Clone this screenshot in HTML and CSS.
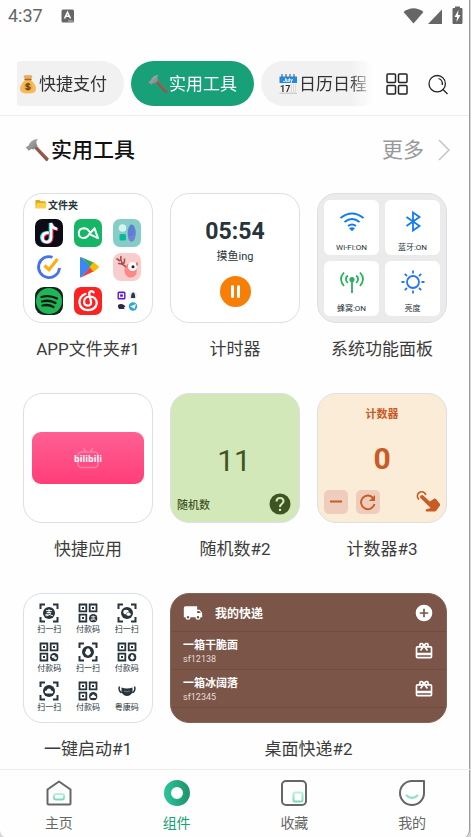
FILE: index.html
```html
<!DOCTYPE html>
<html lang="zh-CN">
<head>
<meta charset="utf-8">
<meta name="viewport" content="width=device-width, initial-scale=1">
<title>组件</title>
<link rel="stylesheet" href="styles.css">
</head>
<body>
<svg class="defs" aria-hidden="true">
  <defs>
    <linearGradient id="ring" x1="0" y1="0" x2="1" y2="0"><stop offset="0" stop-color="#2abf97"/><stop offset="1" stop-color="#1f9872"/></linearGradient>
    <linearGradient id="steel" x1="0" y1="0" x2="1" y2="1"><stop offset="0" stop-color="#b5b9bb"/><stop offset="1" stop-color="#74797c"/></linearGradient>
    <linearGradient id="mint" x1="0" y1="0" x2="0" y2="1"><stop offset="0" stop-color="#bdeedd"/><stop offset="1" stop-color="#79d9bc"/></linearGradient>
    <symbol id="hammer" viewBox="0 0 24 24">
      <path d="M8.500 9.500 11 7.200 23.300 20.200Q24 22.500 21.300 23.300Z" fill="#8d5a4b"/>
      <path d="m9 8.500 1.500-1.200 12.500 13" fill="none" stroke="#a8705f" stroke-width="1"/>
      <path d="M.6 9.300 3.300 7.800Q6 1.200 13 1q-2.500 2-1.600 4.200l1 2.600-3.800 3.800-2.300-.6-2.700 1.800Z" fill="url(#steel)"/>
    </symbol>
    <symbol id="scan" viewBox="0 0 20 20">
      <path d="M1.500 6V1.500H6M14 1.500h4.500V6M18.500 14v4.500H14M6 18.500H1.500V14" fill="none" stroke="#27343a" stroke-width="2"/>
    </symbol>
    <symbol id="qr" viewBox="0 0 20 20">
      <g fill="none" stroke="#27343a" stroke-width="1.800"><path d="M1.500 1.500h6.800v6.800H1.500zM11.700 1.500h6.800v6.800h-6.800zM1.500 11.700h6.800v6.800H1.500z"/></g>
      <path d="M4 4h2v2H4zM14 4h2v2h-2zM4 14h2v2H4z" fill="#27343a"/>
    </symbol>
    <symbol id="gift" viewBox="0 0 24 24">
      <path d="M20 6h-2.180c.11-.31.18-.65.18-1a3 3 0 0 0-5.500-1.650l-.5.670-.5-.680A3 3 0 0 0 6 5c0 .35.070.69.180 1H4a2 2 0 0 0-2 2v11a2 2 0 0 0 2 2h16a2 2 0 0 0 2-2V8a2 2 0 0 0-2-2zm-5-2a1 1 0 1 1 0 2 1 1 0 0 1 0-2zM9 4a1 1 0 1 1 0 2 1 1 0 0 1 0-2zm11 15H4v-2h16v2zm0-5H4V8h5.080L7 10.830 8.620 12 12 7.400l3.380 4.600L17 10.830 14.920 8H20v6z" fill="currentColor"/>
    </symbol>
    <symbol id="pay" viewBox="0 0 10 10"><circle cx="5" cy="5" r="5" fill="#27343a"/><path d="M2.500 3h5M5 1.700v2.800M3 4.600h3.600Q5.500 7 3.200 7.400 1.800 7.200 2.400 6.200q1.500-1 5.900 1.200" fill="none" stroke="#fff" stroke-width=".8"/></symbol>
    <symbol id="chat" viewBox="0 0 10 10"><circle cx="5" cy="5" r="5" fill="#27343a"/><ellipse cx="4.200" cy="4.200" rx="2.300" ry="1.900" fill="#fff"/><ellipse cx="6.300" cy="6" rx="2" ry="1.600" fill="#fff" stroke="#27343a" stroke-width=".4"/></symbol>
    <symbol id="penguin" viewBox="0 0 10 10"><circle cx="5" cy="5" r="5" fill="#27343a"/><path d="M5 1.800Q6.700 1.800 6.800 4q1.100 1.500.7 2.500l-.8-.2Q6.600 8 5 8T3.300 6.300l-.8.2Q2.100 5.500 3.200 4 3.300 1.800 5 1.800z" fill="#fff"/></symbol>
    <symbol id="cloud" viewBox="0 0 10 10"><circle cx="5" cy="5" r="5" fill="#27343a"/><path d="M2.700 7Q1.200 6.700 1.600 5.500 2 4.500 3 4.700 3.500 3 5 3t2 1.700q1.500 0 1.500 1.200T7.300 7z" fill="#fff"/></symbol>
  </defs>
</svg>

<div class="phone">
  <div class="status">
    <span class="clock">4:37</span>
    <svg class="status-app" viewBox="0 0 14 14" aria-hidden="true"><rect x=".5" y=".5" width="12.500" height="13" rx="1.500" fill="#666"/><path d="m3.500 9.500 3-6.300 3 6.300M4.800 7.300h3.500" fill="none" stroke="#fff" stroke-width="1.500"/><path d="M7 12h5" stroke="#ddd" stroke-width=".8"/></svg>
    <svg class="status-signals" viewBox="0 0 60 20" aria-hidden="true">
      <path d="M.5 6Q10.500-1.500 20.500 6L10.500 17.500z" fill="#666"/>
      <path d="M25 18 39 3.500V18z" fill="#666"/>
      <path d="M50.500 2H52V.500h5V2h1.500q1 0 1 1v13.500q0 1.500-1 1.500h-8q-1 0-1-1.500V3q0-1 1-1z" fill="#666"/><path d="m55.500 4-4 7H54l-.5 5 4-7H55z" fill="#fff"/>
    </svg>
  </div>

  <header class="topbar">
    <div class="chips">
      <button class="chip" type="button"><svg class="emoji" viewBox="0 0 20 20" aria-hidden="true"><path d="M7 .7q1.500 1 3 .2 1.500.9 3-.2l1.500 2L12.500 6h-5L5.500 2.700z" fill="#e8ad57"/><path d="M7.500 5.500h5q5.500 5 5.500 9.500Q18 19.500 10 19.500T2 15q0-4.500 5.500-9.500z" fill="#f5b957"/><path d="M7 5.500h6" stroke="#a66c27" stroke-width="1.400" stroke-linecap="round"/><circle cx="10" cy="12.700" r="4.300" fill="#f2a83c"/><path d="M12 10.800Q11.500 9.900 10 9.900q-2 0-2 1.300t2 1.400q2.200.2 2.200 1.500T10 15.500q-1.900 0-2.300-1.200M10 8.800v7.800" fill="none" stroke="#6b4416" stroke-width="1.300"/></svg>快捷支付</button>
      <button class="chip chip-on" type="button"><svg class="emoji" aria-hidden="true"><use href="#hammer"/></svg>实用工具</button>
      <button class="chip" type="button"><svg class="emoji" viewBox="0 0 20 20" aria-hidden="true"><rect x="1.500" y="2" width="17.500" height="17.500" rx="1" fill="#f2f2f2"/><path d="M1.500 2.500h17.500v6.500H1.500z" fill="#2489dc"/><path d="M4 0v3M8 0v3M12 0v3M16 0v3" stroke="#5b6972" stroke-width="1.200"/><text x="10" y="8" class="cal-month">July</text><text x="7.200" y="17.500" class="cal-day">17</text><path d="M13 11h5M13 13h5M13 15h5M13 17h5" stroke="#bbb" stroke-width=".8" stroke-dasharray="1 1"/><path d="M1.500 19.200h17.500" stroke="#b8c2c8"/></svg>日历日程</button>
    </div>
    <button class="tool" type="button" aria-label="全部分类"><svg viewBox="0 0 22 22" aria-hidden="true"><g fill="none" stroke="#222" stroke-width="1.500"><rect x="1" y="1" width="8.500" height="8.500" rx="1"/><rect x="12.500" y="1" width="8.500" height="8.500" rx="1"/><rect x="1" y="12.500" width="8.500" height="8.500" rx="1"/><rect x="12.500" y="12.500" width="8.500" height="8.500" rx="1"/></g></svg></button>
    <button class="tool" type="button" aria-label="搜索"><svg viewBox="0 0 22 22" aria-hidden="true"><g fill="none" stroke="#222" stroke-width="1.300"><circle cx="10.200" cy="10.700" r="8.200"/><path d="m16 16.500 4.500 4.500"/><path d="M11.500 5.500q4.500 1.500 3.800 6.500"/></g></svg></button>
  </header>

  <main>
    <div class="section-head">
      <h1><svg class="title-icon" aria-hidden="true"><use href="#hammer"/></svg>实用工具</h1>
      <a class="more" href="#more">更多<svg viewBox="0 0 12 22" aria-hidden="true"><path d="m1 1 10 10L1 21" fill="none" stroke="#c4c4c4" stroke-width="1.500"/></svg></a>
    </div>

    <div class="widgets">
      <figure>
        <div class="card folder">
          <div class="folder-title"><svg viewBox="0 0 12 12" aria-hidden="true"><path d="M.5 2h4l1.200 1.300h4.800V10H.5z" fill="#e8a51b"/><path d="M2 5h9.800l-1.300 5.500H.5z" fill="#fdd147"/></svg>文件夹</div>
          <div class="apps">
            <svg viewBox="0 0 28 28" role="img" aria-label="抖音"><rect width="28" height="28" rx="7" fill="#0c0b16"/><g fill="none" stroke-width="3"><path d="M13 13.500q-6-.5-6.500 5 .5 4.500 4.500 4.500 4-.2 4.200-5V4q.5 4.500 6 5.500" stroke="#25e8e0"/><path d="M14.800 14.500q-6-.5-6.500 5 .5 4 4.500 4 4-.2 4.200-5V5q.5 4.500 6 5.500" stroke="#fb2b54"/><path d="M13.900 13.800q-6-.5-6.500 5 .5 4.300 4.500 4.300 4-.2 4.200-5V4q.5 5 6 6" stroke="#fff" stroke-width="2.600"/></g></svg>
            <svg viewBox="0 0 28 28" role="img" aria-label="酷安"><rect width="28" height="28" rx="7" fill="#15b766"/><path d="M14 10.800Q12.500 9.300 10 9.300q-5.200.2-5.200 5T10 19q3-.2 5-3.500L20.500 9.300 24 19.200l-7-3.400M14 10.800l2.500 3" fill="none" stroke="#fff" stroke-width="2" stroke-linejoin="round" stroke-linecap="round"/></svg>
            <svg viewBox="0 0 28 28" role="img" aria-label="小组件"><rect width="28" height="28" rx="7" fill="#85cdc6"/><circle cx="9.500" cy="9" r="3.800" fill="#d5f4f1"/><rect x="6.500" y="15" width="6.500" height="6.500" rx="1.500" fill="#07b99b"/><ellipse cx="18.700" cy="14" rx="4" ry="8.500" fill="#5b82d2"/><path d="M15 17q4 2 7.500-4-.3 9.500-3.800 9.500T15 17z" fill="#7780d7"/></svg>
            <svg viewBox="0 0 28 28" role="img" aria-label="滴答清单"><path d="M17.500 4.200A10.500 10.500 0 1 0 24.500 15" fill="none" stroke="#4772ef" stroke-width="2.800"/><path d="m9.500 12.500 4.500 4.200L22.500 6" fill="none" stroke="#feae12" stroke-width="3.200"/></svg>
            <svg viewBox="0 0 28 28" role="img" aria-label="Google Play"><path d="M6 5v19q.3.700 1 .500L17 14 7 4Q6.200 4 6 5z" fill="#3d86f5"/><path d="m7 4 9.500 10 4-4z" fill="#30a852"/><path d="M7 24.500 16.500 14l4 4z" fill="#ea4236"/><path d="m19.500 9 4.800 4q1 1 0 2l-4.800 4-4-5z" fill="#fbba05"/></svg>
            <svg viewBox="0 0 28 28" role="img" aria-label="小鹿"><rect width="28" height="28" rx="8" fill="#f8cdcd"/><path d="M12 13q4-5 11-1 1 5 .5 9-3.500 5-8.500 3-5-3-3-11z" fill="#ff8788"/><circle cx="19.500" cy="13.500" r="4.500" fill="#fff"/><circle cx="20" cy="13.800" r="1.500" fill="#222"/><path d="M13 14Q9 10 5 10.500M10 11.500Q7 7 8 3M7 8 3.500 5.500M10.500 11Q12 9 11.500 5.500" fill="none" stroke="#a94e50" stroke-width="1.600"/><path d="M24 9.500v3" stroke="#ef5055" stroke-width="1.500"/></svg>
            <svg viewBox="0 0 28 28" role="img" aria-label="Spotify"><rect width="28" height="28" rx="9" fill="#15241b"/><circle cx="14" cy="14" r="13" fill="#20b657"/><path d="M6.500 10q8-2.500 15.500 1.500M7 14.500q7-2 13.500 1.500M7.500 18.500q6-1.500 11 1.500" fill="none" stroke="#101b14" stroke-width="2.300" stroke-linecap="round"/></svg>
            <svg viewBox="0 0 28 28" role="img" aria-label="网易云音乐"><rect width="28" height="28" rx="7" fill="#fc2222"/><path d="M11.500 6.800Q5 9.500 5.500 16q1 7 8.500 7.200 8-.5 8.800-7.200-.5-6.300-6.800-6.500-6 .2-6 5.500.3 3.500 3.800 3.700 3.700-.2 3.200-4L15.200 7q0-2.500 2.200-2.800 1.500 0 2.300 1.200" fill="none" stroke="#fff" stroke-width="2.200" stroke-linecap="round"/></svg>
            <svg viewBox="0 0 28 28" role="img" aria-label="更多应用"><rect x="4.500" y="4.500" width="8" height="8" rx="1.500" fill="#5b16d9"/><rect x="6.500" y="6.800" width="4" height="3.500" fill="none" stroke="#fff" stroke-width="1.200"/><circle cx="20" cy="8.500" r="4" fill="#eee"/><path d="M18 11q0-5 2-5.500t2.200 5.500z" fill="#28364e"/><path d="M5 18q3-2 6 0l1.500 1.500-1.500 1 .5 1.500H6l-1-2z" fill="#2b2b4a"/><circle cx="20" cy="19.500" r="4.200" fill="#2ca4dc"/><path d="m17 19.500 6-2.500-1.500 5-2-1.500z" fill="#fff"/></svg>
          </div>
        </div>
        <figcaption>APP文件夹#1</figcaption>
      </figure>

      <figure>
        <div class="card timer">
          <span class="timer-value">05:54</span>
          <span class="timer-name">摸鱼ing</span>
          <button class="pause" type="button" aria-label="暂停"><svg viewBox="0 0 31 31" aria-hidden="true"><path d="M12.500 10.500v10M18.500 10.500v10" stroke="#fff" stroke-width="3" stroke-linecap="round"/></svg></button>
        </div>
        <figcaption>计时器</figcaption>
      </figure>

      <figure>
        <div class="card panel">
          <button class="switch" type="button"><svg viewBox="0 0 28 28" aria-hidden="true"><g fill="none" stroke="#137bf2" stroke-width="2"><path d="M2.500 11q11.500-9 23 0M6.500 15q7.500-6 15 0M10 19q4-3 8 0"/></g><path d="M11 21.300q3-2 6 0l-3 3z" fill="#137bf2"/></svg>Wi-Fi:ON</button>
          <button class="switch" type="button"><svg viewBox="0 0 28 28" aria-hidden="true"><path d="m7.500 10 13 9-6.500 4.500v-18l6.500 4.500-13 9" fill="none" stroke="#137bf2" stroke-width="1.800"/></svg>蓝牙:ON</button>
          <button class="switch" type="button"><svg viewBox="0 0 28 28" aria-hidden="true"><g fill="none" stroke="#27b25c" stroke-width="1.800"><path d="M6 4.500Q0 11 6 18M22 4.500q6 6.500 0 13.500M9.800 7.500Q6 11 9.800 15M18.200 7.500q3.800 3.500 0 7.500M14 11v14"/></g><circle cx="14" cy="11.500" r="2.600" fill="#27b25c"/></svg>蜂窝:ON</button>
          <button class="switch" type="button"><svg viewBox="0 0 28 28" aria-hidden="true"><g fill="none" stroke="#2676f4" stroke-width="1.800"><circle cx="14" cy="14" r="6"/><path d="M14 2.500v3M14 22.500v3M2.500 14h3M22.500 14h3M5.800 5.800 8 8M20 20l2.200 2.200M5.800 22.200 8 20M20 8l2.200-2.200"/></g></svg>亮度</button>
        </div>
        <figcaption>系统功能面板</figcaption>
      </figure>

      <figure>
        <div class="card launcher">
          <button class="bili" type="button"><svg viewBox="0 0 24 22" aria-hidden="true"><g fill="none" stroke="#ff7fa9" stroke-width="1.600" stroke-linecap="round"><rect x="2" y="5" width="20" height="15.500" rx="3.500"/><path d="m7.500 1.500 2 3M16.500 1.500l-2 3"/></g></svg><span>bilibili</span></button>
        </div>
        <figcaption>快捷应用</figcaption>
      </figure>

      <figure>
        <div class="card random">
          <span class="random-value">11</span>
          <div class="random-foot"><span>随机数</span><svg viewBox="0 0 22 22" aria-hidden="true"><circle cx="11" cy="11" r="10.500" fill="#3e5422"/><path d="M7.500 8.500Q7.500 5 11 5t3.500 3.300Q14.500 10 12.500 11.200 11 12 11 14M11 15.700V18" fill="none" stroke="#d2e8b9" stroke-width="2.100"/></svg></div>
        </div>
        <figcaption>随机数#2</figcaption>
      </figure>

      <figure>
        <div class="card counter">
          <span class="counter-name">计数器</span>
          <span class="counter-value">0</span>
          <div class="counter-foot">
            <button type="button" aria-label="减一"><svg viewBox="0 0 24 24" aria-hidden="true"><path d="M6 11.500h12" stroke="#c95b27" stroke-width="1.800"/></svg></button>
            <button type="button" aria-label="重置"><svg viewBox="0 0 24 24" aria-hidden="true"><path d="M17.500 8.500A6.800 6.800 0 1 0 18.500 14" fill="none" stroke="#c95b27" stroke-width="1.900"/><path d="M19 5v6h-6z" fill="#c95b27"/></svg></button>
            <svg class="tap" viewBox="0 0 24 24" aria-hidden="true"><path d="M3 9.500A4.300 4.300 0 1 1 9.800 5" fill="none" stroke="#c95b27" stroke-width="1.600"/><path d="M4.500 5.800q1.500-1.500 3 0l6.300 5.700 4.200-2.800q1-.5 2 .3l3.800 4.800q.7 1 0 2l-3.600 5q-.5.800-1.500.8h-8q-1.200 0-1-1l.5-1.300 4.500-1.300-10.200-10q-1-1 0-2.200z" fill="#c95b27"/></svg>
          </div>
        </div>
        <figcaption>计数器#3</figcaption>
      </figure>

      <figure>
        <div class="card codes">
          <div class="code"><svg viewBox="0 0 20 20" aria-hidden="true"><use href="#scan"/><use href="#pay" x="4" y="4" width="12" height="12"/></svg>扫一扫</div>
          <div class="code"><svg viewBox="0 0 20 20" aria-hidden="true"><use href="#qr"/><use href="#pay" x="11" y="11" width="8.500" height="8.500"/></svg>付款码</div>
          <div class="code"><svg viewBox="0 0 20 20" aria-hidden="true"><use href="#scan"/><use href="#chat" x="4" y="4" width="12" height="12"/></svg>扫一扫</div>
          <div class="code"><svg viewBox="0 0 20 20" aria-hidden="true"><use href="#qr"/><use href="#chat" x="11" y="11" width="8.500" height="8.500"/></svg>付款码</div>
          <div class="code"><svg viewBox="0 0 20 20" aria-hidden="true"><use href="#scan"/><use href="#penguin" x="4" y="4" width="12" height="12"/></svg>扫一扫</div>
          <div class="code"><svg viewBox="0 0 20 20" aria-hidden="true"><use href="#qr"/><use href="#penguin" x="11" y="11" width="8.500" height="8.500"/></svg>付款码</div>
          <div class="code"><svg viewBox="0 0 20 20" aria-hidden="true"><use href="#scan"/><use href="#cloud" x="4" y="4" width="12" height="12"/></svg>扫一扫</div>
          <div class="code"><svg viewBox="0 0 20 20" aria-hidden="true"><use href="#qr"/><use href="#cloud" x="11" y="11" width="8.500" height="8.500"/></svg>付款码</div>
          <div class="code"><svg viewBox="0 0 20 20" aria-hidden="true"><path d="M4.500 6.500Q10 8.500 15.500 6.500v5Q13 15 10 15t-5.500-3.500z" fill="#27343a"/><path d="M4.500 12Q1 9 2.500 5.500M15.500 12Q19 9 17.500 5.500" fill="none" stroke="#27343a" stroke-width="1.500"/><path d="M7 10q3 1.500 6 0" fill="none" stroke="#889196" stroke-width=".8"/></svg>粤康码</div>
        </div>
        <figcaption>一键启动#1</figcaption>
      </figure>

      <figure class="wide">
        <div class="card parcels">
          <div class="parcel-head">
            <svg viewBox="0 0 24 24" aria-hidden="true"><path d="M20 8h-3V4H3a2 2 0 0 0-2 2v11h2a3 3 0 0 0 6 0h6a3 3 0 0 0 6 0h2v-5l-3-4zM6 18.500a1.500 1.500 0 1 1 0-3 1.500 1.500 0 0 1 0 3zm13.500-9 1.960 2.500H17V9.500h2.500zm-1.500 9a1.500 1.500 0 1 1 0-3 1.500 1.500 0 0 1 0 3z" fill="currentColor"/></svg>
            <strong>我的快递</strong>
            <button type="button" aria-label="添加"><svg viewBox="0 0 24 24" aria-hidden="true"><path d="M12 2a10 10 0 1 0 0 20 10 10 0 0 0 0-20zm5 11h-4v4h-2v-4H7v-2h4V7h2v4h4v2z" fill="currentColor"/></svg></button>
          </div>
          <div class="parcel"><div><strong>一箱干脆面</strong><span>sf12138</span></div><svg aria-hidden="true"><use href="#gift"/></svg></div>
          <div class="parcel"><div><strong>一箱冰阔落</strong><span>sf12345</span></div><svg aria-hidden="true"><use href="#gift"/></svg></div>
        </div>
        <figcaption>桌面快递#2</figcaption>
      </figure>
    </div>
  </main>

  <nav class="tabs">
    <a href="#home"><svg viewBox="0 0 28 28" aria-hidden="true"><path d="M2.500 10.500 14 2.500l11.500 8v14q0 1-1 1h-21q-1 0-1-1z" fill="none" stroke="#666" stroke-width="2" stroke-linejoin="round"/><rect x="9" y="15" width="10" height="5.500" rx="2" fill="none" stroke="url(#mint)" stroke-width="2"/></svg>主页</a>
    <a class="tab-on" href="#widgets" aria-current="page"><svg viewBox="0 0 28 28" aria-hidden="true"><circle cx="14" cy="14" r="9.500" fill="none" stroke="url(#ring)" stroke-width="7"/></svg>组件</a>
    <a href="#saved"><svg viewBox="0 0 28 28" aria-hidden="true"><rect x="2" y="2" width="24" height="24" rx="4" fill="none" stroke="#666" stroke-width="2"/><rect x="13.500" y="13.500" width="9" height="9" rx="1.500" fill="none" stroke="url(#mint)" stroke-width="2"/></svg>收藏</a>
    <a href="#me"><svg viewBox="0 0 28 28" aria-hidden="true"><path d="M14 2h12v12A12 12 0 1 1 14 2z" fill="none" stroke="#666" stroke-width="2" stroke-linejoin="round"/><path d="M8 16q6 6 12 0" fill="none" stroke="#8fe0c8" stroke-width="2.400"/></svg>我的</a>
  </nav>
</div>
</body>
</html>
```
FILE: styles.css
```css
* {
  box-sizing: border-box;
}

body {
  margin: 0;
  background: #d6d6d6;
  font-family: Roboto, "Noto Sans CJK SC", sans-serif;
  color: #3c3c3c;
}

button {
  margin: 0;
  padding: 0;
  border: 0;
  background: none;
  color: inherit;
  font: inherit;
}

a {
  color: inherit;
  text-decoration: none;
}

svg {
  display: block;
  flex: none;
}

.defs {
  position: absolute;
  width: 0;
  height: 0;
}

.phone {
  display: flex;
  flex-direction: column;
  min-height: 100vh;
  margin-right: 1px;
  border-right: 1px solid #9a9a9a;
  border-radius: 0 0 8px 8px;
  background: #fefefe;
}

/* Status bar */
.status {
  display: flex;
  align-items: center;
  height: 32px;
  padding: 0 6px 0 8px;
  color: #666;
}

.clock {
  font-size: 18px;
  line-height: 32px;
}

.status-app {
  width: 14px;
  height: 14px;
  margin-left: 18px;
}

.status-signals {
  width: 60px;
  height: 20px;
  margin-left: auto;
}

/* Category bar */
.topbar {
  display: flex;
  align-items: center;
  padding: 29px 20px 9px 17px;
  border-bottom: 1px solid #ececec;
}

.chips {
  display: flex;
  flex: 1;
  gap: 7px;
  min-width: 0;
  margin-right: 12px;
  overflow: hidden;
  -webkit-mask-image: linear-gradient(to left, transparent, #000 24px);
  mask-image: linear-gradient(to left, transparent, #000 24px);
}

.chip {
  display: flex;
  flex: none;
  align-items: center;
  height: 45px;
  padding: 0 17px;
  border-radius: 23px;
  background: #f1f1f1;
  color: #333;
  font-size: 17px;
  line-height: 24px;
}

.chip:first-child {
  margin-left: -16px;
}

.chip-on {
  background: #18a078;
  color: #fff;
}

.emoji {
  width: 20px;
  height: 20px;
  margin-right: 1px;
}

.cal-month {
  fill: #fff;
  font-size: 5px;
  font-weight: 700;
  text-anchor: middle;
}

.cal-day {
  fill: #333;
  font-size: 9px;
  font-weight: 700;
  text-anchor: middle;
}

.tool svg {
  width: 22px;
  height: 22px;
}

.tool + .tool {
  margin-left: 19px;
}

/* Section heading */
.section-head {
  display: flex;
  align-items: center;
  justify-content: space-between;
  height: 68px;
  padding: 0 19px 0 25px;
}

h1 {
  display: flex;
  align-items: center;
  gap: 2px;
  margin: 0;
  color: #111;
  font-size: 21px;
  font-weight: 500;
  line-height: 28px;
}

.title-icon {
  width: 24px;
  height: 24px;
}

.more {
  display: flex;
  align-items: center;
  gap: 14px;
  color: #999;
  font-size: 21px;
  line-height: 28px;
}

.more svg {
  width: 12px;
  height: 22px;
}

main {
  flex: 1;
}

/* Widget gallery */
.widgets {
  display: grid;
  grid-template-columns: repeat(3, minmax(0, 1fr));
  gap: 31px 17px;
  padding: 9px 22px 7px 23px;
}

figure {
  display: flex;
  flex-direction: column;
  margin: 0;
}

.wide {
  grid-column: span 2;
}

figcaption {
  margin-top: 13px;
  font-size: 17px;
  line-height: 26px;
  text-align: center;
}

.card {
  aspect-ratio: 1;
  overflow: hidden;
  border: 1px solid #dbe0e4;
  border-radius: 19px;
  background: #fff;
}

.wide .card {
  flex: 1;
  aspect-ratio: auto;
}

.folder {
  padding: 2px 11px;
}

.folder-title {
  display: flex;
  align-items: center;
  gap: 1px;
  height: 16px;
  color: #27343a;
  font-size: 10px;
  font-weight: 700;
}

.folder-title svg {
  width: 12px;
  height: 12px;
}

.apps {
  display: grid;
  grid-template-columns: repeat(3, 28px);
  justify-content: space-between;
  gap: 6px 0;
  margin-top: 7px;
}

.apps svg {
  width: 28px;
  height: 28px;
}

.timer {
  display: flex;
  flex-direction: column;
  align-items: center;
  padding-top: 24px;
  color: #27343a;
}

.timer-value {
  font-size: 23px;
  font-weight: 700;
  line-height: 28px;
}

.timer-name {
  margin-top: 3px;
  font-size: 11px;
  line-height: 16px;
}

.pause {
  margin-top: 11px;
  border-radius: 50%;
  background: #f77f05;
}

.pause svg {
  width: 31px;
  height: 31px;
}

.panel {
  display: grid;
  grid-template-columns: 1fr 1fr;
  gap: 6px;
  padding: 6px;
  background: #ebebeb;
}

.switch {
  display: flex;
  flex-direction: column;
  align-items: center;
  justify-content: space-between;
  padding: 7px 0 1px;
  border-radius: 6px;
  background: #fff;
  color: #27343a;
  font-size: 8px;
  line-height: 12px;
}

.switch svg {
  width: 28px;
  height: 28px;
}

.launcher {
  display: flex;
  align-items: center;
  padding: 0 8px;
}

.bili {
  display: grid;
  place-items: center;
  width: 100%;
  height: 52px;
  border-radius: 9px;
  background: linear-gradient(#ff6094, #ff3d79);
  color: #fff;
}

.bili > * {
  grid-area: 1 / 1;
}

.bili svg {
  width: 24px;
  height: 22px;
}

.bili span {
  font-family: "Open Sans", sans-serif;
  font-size: 9px;
  font-weight: 700;
}

.random {
  display: flex;
  flex-direction: column;
  justify-content: flex-end;
  padding: 0 8px 7px 6px;
  background: #d2e8b9;
  color: #3e5422;
}

.random-value {
  font-size: 30px;
  line-height: 36px;
  text-align: center;
}

.random-foot {
  display: flex;
  align-items: center;
  justify-content: space-between;
  margin-top: 14px;
  font-size: 11px;
  font-weight: 500;
}

.random-foot svg {
  width: 22px;
  height: 22px;
}

.counter {
  display: flex;
  flex-direction: column;
  padding: 13px 6px 8px;
  background: #fbecd7;
  color: #c95b27;
  text-align: center;
}

.counter-name {
  font-size: 11px;
  font-weight: 700;
  line-height: 16px;
}

.counter-value {
  margin-top: 20px;
  font-size: 30px;
  font-weight: 700;
  line-height: 32px;
}

.counter-foot {
  display: flex;
  align-items: center;
  gap: 8px;
  margin-top: auto;
}

.counter-foot button {
  border-radius: 5px;
  background: #efcdbd;
}

.counter-foot svg {
  width: 24px;
  height: 24px;
}

.counter-foot .tap {
  margin-left: auto;
}

.codes {
  display: grid;
  grid-template-columns: repeat(3, 1fr);
  align-content: space-between;
  padding: 9px 6px 8px;
}

.code {
  display: flex;
  flex-direction: column;
  align-items: center;
  gap: 1px;
  color: #27343a;
  font-size: 8px;
  line-height: 12px;
}

.code svg {
  width: 20px;
  height: 20px;
}

.parcels {
  border-color: #866558;
  background: #7a5548;
  color: #fff;
}

.parcel-head,
.parcel {
  display: flex;
  align-items: center;
  height: 38px;
  padding: 0 12px;
  border-bottom: 1px solid #714d41;
}

.parcel-head strong {
  flex: 1;
  margin-left: 12px;
  font-size: 12px;
  font-weight: 700;
}

.parcels svg {
  width: 20px;
  height: 20px;
}

.parcel {
  justify-content: space-between;
}

.parcel strong,
.parcel span {
  display: block;
}

.parcel strong {
  padding-top: 1px;
  font-size: 11px;
  font-weight: 700;
  line-height: 15px;
}

.parcel span {
  color: #e6dcd8;
  font-size: 9px;
  line-height: 12px;
}

/* Bottom navigation */
.tabs {
  display: grid;
  grid-template-columns: repeat(4, 1fr);
  margin-right: -2px;
  padding: 9px 0 4px;
  border-top: 1px solid #ececec;
}

.tabs a {
  display: flex;
  flex-direction: column;
  align-items: center;
  gap: 6px;
  color: #666;
  font-size: 14px;
  line-height: 21px;
}

.tabs svg {
  width: 28px;
  height: 28px;
}

.tabs .tab-on {
  color: #18a078;
}
```
